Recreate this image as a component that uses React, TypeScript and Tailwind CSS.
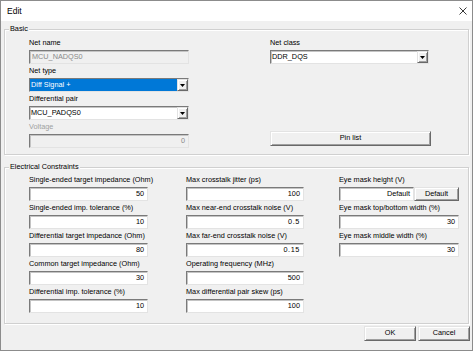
const sunken =
  'border border-t-[#7a7a7a] border-l-[#7a7a7a] border-r-[#e3e3e3] border-b-[#e3e3e3] shadow-[inset_1px_1px_0_#c4c4c4]';
const raised =
  'border border-t-[#e3e3e3] border-l-[#e3e3e3] border-r-[#696969] border-b-[#696969] shadow-[inset_1px_1px_0_#fff,inset_-1px_-1px_0_#a0a0a0] bg-[#f0f0f0]';
const groupBox =
  'border border-[#d0d0d0] shadow-[inset_1px_1px_0_#fff,1px_1px_0_#fff] mx-[3px] min-w-0';

const Tri = () => (
  <svg width="5" height="3" viewBox="0 0 5 3">
    <path d="M0 0H5L2.5 3Z" fill="#000" />
  </svg>
);

const Label = ({ text, disabled }: { text: string; disabled?: boolean }) => (
  <div className={`h-[14px] whitespace-nowrap leading-[14px] ${disabled ? 'text-[#a0a0a0]' : 'text-black'}`}>
    {text}
  </div>
);

const Field = ({
  value,
  disabled,
  left,
  className = '',
}: {
  value: string;
  disabled?: boolean;
  left?: boolean;
  className?: string;
}) => (
  <div
    className={`h-[14px] ${sunken} ${disabled ? 'bg-[#f0f0f0] text-[#8a8a8a]' : 'bg-white text-black'} ${
      left ? 'px-[2px] text-left' : 'px-[3px] text-right'
    } whitespace-nowrap leading-[12px] ${className}`}
  >
    {value}
  </div>
);

const Select = ({ value, selected }: { value: string; selected?: boolean }) => (
  <div className={`flex h-[14px] bg-white ${sunken}`}>
    <div className={`flex-1 px-[1px] leading-[12px] ${selected ? 'bg-[#0078d7] text-white' : 'text-black'}`}>
      {value}
    </div>
    <div className={`flex w-[11px] items-center justify-center ${raised}`}>
      <Tri />
    </div>
  </div>
);

const Button = ({ text, className = '' }: { text: string; className?: string }) => (
  <div className={`flex items-center justify-center ${raised} ${className}`}>{text}</div>
);

const Row = ({ label, children }: { label: string; children: React.ReactNode }) => (
  <div className="h-[28px]">
    <Label text={label} />
    {children}
  </div>
);

export default function App() {
  return (
    <div className="min-h-screen bg-white font-['Liberation_Sans',Arial,sans-serif] text-[7.3px]">
      <div className="flex h-[351px] w-[473px] flex-col border border-[#8c8c8c] bg-[#f0f0f0]">
        {/* Title bar */}
        <div className="flex h-[20px] items-center justify-between bg-white pl-[6px] pr-[5px]">
          <span className="text-[8.5px] text-black">Edit</span>
          <svg width="8" height="8" viewBox="0 0 8 8">
            <path d="M0.5 0.5L7.5 7.5M7.5 0.5L0.5 7.5" stroke="#222" strokeWidth="0.9" />
          </svg>
        </div>

        {/* Basic */}
        <fieldset className={`${groupBox} mt-[3px]`}>
          <legend className="ml-[4px] bg-[#f0f0f0] px-[1px] leading-[10px]">Basic</legend>
          <div className="flex pb-[6px] pl-[24px] pt-[2px]">
            <div className="w-[160px]">
              <Row label="Net name">
                <Field value="MCU_NADQS0" disabled left className="text-[#6d6d6d]" />
              </Row>
              <Row label="Net type">
                <Select value="Diff Signal +" selected />
              </Row>
              <Row label="Differential pair">
                <Select value="MCU_PADQS0" />
              </Row>
              <div className="h-[28px]">
                <Label text="Voltage" disabled />
                <Field value="0" disabled />
              </div>
            </div>
            <div className="ml-[81px] w-[161px]">
              <div className="w-[159px]">
                <Row label="Net class">
                  <Select value="DDR_DQS" />
                </Row>
              </div>
              <Button text="Pin list" className="mt-[67px] h-[15px] w-[161px]" />
            </div>
          </div>
        </fieldset>

        {/* Electrical Constraints */}
        <fieldset className={`${groupBox} mt-[7px]`}>
          <legend className="ml-[4px] bg-[#f0f0f0] px-[1px] leading-[10px]">Electrical Constraints</legend>
          <div className="flex pb-[10px] pl-[24px] pt-[1px]">
            <div className="w-[119px]">
              <Row label="Single-ended target impedance (Ohm)">
                <Field value="50" />
              </Row>
              <Row label="Single-ended imp. tolerance (%)">
                <Field value="10" />
              </Row>
              <Row label="Differential target impedance (Ohm)">
                <Field value="80" />
              </Row>
              <Row label="Common target impedance (Ohm)">
                <Field value="30" />
              </Row>
              <Row label="Differential imp. tolerance (%)">
                <Field value="10" />
              </Row>
            </div>
            <div className="ml-[38px] w-[118px]">
              <Row label="Max crosstalk jitter (ps)">
                <Field value="100" />
              </Row>
              <Row label="Max near-end crosstalk noise (V)">
                <Field value="0.5" className="tracking-[0.6px]" />
              </Row>
              <Row label="Max far-end crosstalk noise (V)">
                <Field value="0.15" className="tracking-[0.6px]" />
              </Row>
              <Row label="Operating frequency (MHz)">
                <Field value="500" />
              </Row>
              <Row label="Max differential pair skew (ps)">
                <Field value="100" />
              </Row>
            </div>
            <div className="ml-[35px] w-[120px]">
              <Row label="Eye mask height (V)">
                <div className="flex">
                  <Field value="Default" className="w-[75px]" />
                  <Button text="Default" className="h-[14px] w-[45px]" />
                </div>
              </Row>
              <Row label="Eye mask top/bottom width (%)">
                <Field value="30" />
              </Row>
              <Row label="Eye mask middle width (%)">
                <Field value="30" />
              </Row>
            </div>
          </div>
        </fieldset>

        {/* Dialog buttons */}
        <div className="mt-[2px] flex justify-end gap-[2px] pr-[2px]">
          <Button text="OK" className="h-[15px] w-[52px]" />
          <Button text="Cancel" className="h-[15px] w-[52px]" />
        </div>
      </div>
    </div>
  );
}
